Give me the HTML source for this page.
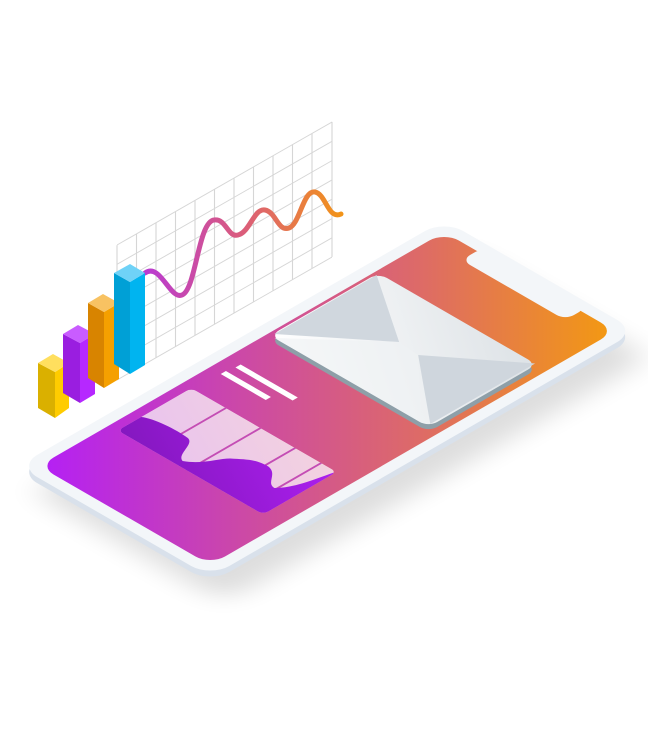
<!DOCTYPE html>
<html><head><meta charset="utf-8"><style>html,body{margin:0;padding:0;background:#fff;}svg{display:block}</style></head>
<body>
<svg width="648" height="748" viewBox="0 0 648 748" xmlns="http://www.w3.org/2000/svg">
<defs>
  <linearGradient id="scr" x1="40" y1="0" x2="620" y2="0" gradientUnits="userSpaceOnUse">
    <stop offset="0" stop-color="#b41ff6"/>
    <stop offset="0.35" stop-color="#cc49a6"/>
    <stop offset="0.65" stop-color="#dd6a68"/>
    <stop offset="1" stop-color="#f49b0e"/>
  </linearGradient>
  <linearGradient id="wave" x1="145" y1="0" x2="342" y2="0" gradientUnits="userSpaceOnUse">
    <stop offset="0" stop-color="#b93ad2"/>
    <stop offset="0.5" stop-color="#db5d7a"/>
    <stop offset="1" stop-color="#f29418"/>
  </linearGradient>
  <linearGradient id="env" x1="0" y1="0" x2="1" y2="1">
    <stop offset="0" stop-color="#ffffff"/>
    <stop offset="1" stop-color="#dde2e6"/>
  </linearGradient>
  <linearGradient id="dark" x1="0" y1="0" x2="1" y2="1">
    <stop offset="0" stop-color="#8417bf"/>
    <stop offset="1" stop-color="#ad1ff0"/>
  </linearGradient>
  <linearGradient id="card" x1="0" y1="0" x2="1" y2="1">
    <stop offset="0" stop-color="#e8c2f0"/>
    <stop offset="1" stop-color="#f3d2df"/>
  </linearGradient>
  <clipPath id="scrClip"><rect transform="matrix(0.866,-0.5,0.866,0.5,18,466)" x="12" y="12" width="468" height="198" rx="17"/></clipPath>
  <clipPath id="cardClip"><rect x="85" y="22" width="85" height="168" rx="6"/></clipPath>
  <filter id="blur" x="-20%" y="-20%" width="140%" height="140%"><feGaussianBlur stdDeviation="14"/></filter>
</defs>

<g transform="matrix(1,-0.572,0,1,117,245)" stroke="#d6d6d6" stroke-width="1.1" fill="none">
  <path d="M0,0V135M19.5,0V135M39,0V135M58.5,0V135M78,0V135M97.5,0V135M117,0V135M136.5,0V135M156,0V135M175.5,0V135M195,0V135M215,0V135"/>
  <path d="M0,0H215M0,19.3H215M0,38.6H215M0,57.9H215M0,77.2H215M0,96.5H215M0,115.8H215M0,135H215"/>
</g>

<path d="M145,273 C160,262 170,300 182,295 C196,290 198,222 214,220 C226,218 228,238 238,235 C250,232 254,208 265,210 C276,212 278,232 289,228 C300,224 303,190 315,192 C326,194 328,220 341,214" fill="none" stroke="url(#wave)" stroke-width="5" stroke-linecap="round"/>

<g>
  <polygon points="38,363 55,372 55,418 38,408" fill="#dab000"/>
  <polygon points="55,372 69,363 69,408 55,418" fill="#ffcc00"/>
  <polygon points="38,363 53,354 69,363 55,372" fill="#ffdf5e"/>
  <polygon points="63,334 80,343 80,403 63,393" fill="#9a1ee0"/>
  <polygon points="80,343 95,334 95,394 80,403" fill="#b628ff"/>
  <polygon points="63,334 78,325 95,334 80,343" fill="#c95cff"/>
  <polygon points="88,303 104,312 104,388 88,378" fill="#d88400"/>
  <polygon points="104,312 119,303 119,379 104,388" fill="#f5a000"/>
  <polygon points="88,303 103,294 119,303 104,312" fill="#f8c262"/>
  <polygon points="114,273 130,282 130,374 114,364" fill="#00a0d6"/>
  <polygon points="130,282 145,273 145,365 130,374" fill="#00b4f0"/>
  <polygon points="114,273 130,264 145,273 130,282" fill="#6fd2f7"/>
</g>

<rect transform="translate(14,26) matrix(0.866,-0.5,0.866,0.5,18,466)" x="0" y="0" width="492" height="222" rx="22" fill="#000" opacity="0.13" filter="url(#blur)"/>
<rect transform="translate(0,6) matrix(0.866,-0.5,0.866,0.5,18,466)" x="0" y="0" width="492" height="222" rx="22" fill="#d9e1eb"/>
<rect transform="matrix(0.866,-0.5,0.866,0.5,18,466)" x="0" y="0" width="492" height="222" rx="22" fill="#f3f6f9"/>
<rect x="0" y="150" width="648" height="450" fill="url(#scr)" clip-path="url(#scrClip)"/>
<rect transform="matrix(0.866,-0.5,0.866,0.5,18,466)" x="462" y="50" width="25" height="120" rx="10" fill="#f3f6f9"/>

<g transform="matrix(0.866,-0.5,0.866,0.5,25,462)">
  <rect x="201" y="25" width="6" height="52" fill="#fff"/>
  <rect x="216" y="27" width="6" height="66" fill="#fff"/>
  <g clip-path="url(#cardClip)">
    <rect x="85" y="22" width="85" height="168" fill="url(#card)"/>
    <path d="M85,62H170M85,102H170M85,142H170M85,172H170" stroke="#c44db4" stroke-width="2.2"/>
    <path d="M85,22 L112,22 C118,30 120,55 118,70 C116,80 95,80 92,90 C100,105 115,108 122,115 C130,125 136,130 136,145 C134,158 118,160 118,170 C130,182 150,184 172,190 L85,190 Z" fill="url(#dark)"/>
  </g>
</g>

<rect transform="translate(0,5) matrix(0.866,-0.5,0.866,0.5,25,462)" x="268" y="15" width="125" height="183" rx="10" fill="#8e9fa8"/>
<g transform="matrix(0.866,-0.5,0.866,0.5,25,462)">
  <rect x="268" y="15" width="125" height="183" rx="10" fill="url(#env)"/>
  <polygon points="272,16 390,16 336,96" fill="#d0d7de"/>
  <polygon points="393,196 272,196 334,120" fill="#cfd6dd"/>
  <polygon points="268,20 336,96 334,120 268,190" fill="#eef1f3" opacity="0.6"/>
</g>
</svg>
</body></html>
